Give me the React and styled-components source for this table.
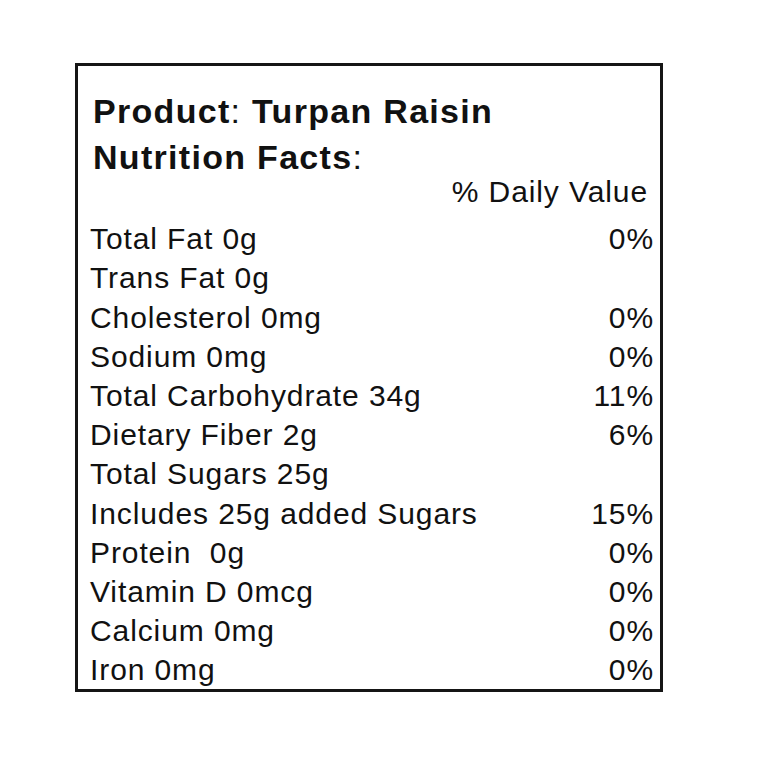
import styled, { createGlobalStyle } from "styled-components";

const GlobalStyle = createGlobalStyle`
  html, body {
    margin: 0;
    padding: 0;
    background: #ffffff;
  }
  body {
    font-family: "Liberation Sans", Arial, sans-serif;
    color: #111111;
  }
`;

const Page = styled.div`
  padding: 63px 0 0 75px;
`;

const Label = styled.section`
  box-sizing: border-box;
  width: 588px;
  height: 629px;
  border: 3px solid #151515;
  padding: 22px 6px 0 12px;
  display: flex;
  flex-direction: column;
`;

const Heading = styled.h1`
  margin: 0 0 0 3px;
  font-size: 34px;
  line-height: 46px;
  font-weight: 700;
  letter-spacing: 1.3px;
  color: #111;
`;

const Colon = styled.span`
  font-weight: 400;
`;

const Row = styled.div`
  display: grid;
  grid-template-columns: 1fr auto;
  align-items: baseline;
  height: 39.2px;
  margin-top: ${(p) => (p.$head ? "-8px" : "0")};
  margin-bottom: ${(p) => (p.$head ? "8px" : "0")};
  font-size: 30px;
  line-height: 39.2px;
  letter-spacing: 0.9px;
  color: #111;
  white-space: pre;
`;

const Name = styled.span``;

const Percent = styled.span`
  text-align: right;
  margin-right: ${(p) => (p.$head ? "6px" : "0")};
`;

const facts = [
  { name: "Total Fat 0g", dv: "0%" },
  { name: "Trans Fat 0g", dv: "" },
  { name: "Cholesterol 0mg", dv: "0%" },
  { name: "Sodium 0mg", dv: "0%" },
  { name: "Total Carbohydrate 34g", dv: "11%" },
  { name: "Dietary Fiber 2g", dv: "6%" },
  { name: "Total Sugars 25g", dv: "" },
  { name: "Includes 25g added Sugars", dv: "15%" },
  { name: "Protein  0g", dv: "0%" },
  { name: "Vitamin D 0mcg", dv: "0%" },
  { name: "Calcium 0mg", dv: "0%" },
  { name: "Iron 0mg", dv: "0%" },
];

export default function App() {
  return (
    <Page>
      <GlobalStyle />
      <Label>
        <Heading>
          Product<Colon>:</Colon> Turpan Raisin
          <br />
          Nutrition Facts<Colon>:</Colon>
        </Heading>
        <Row $head>
          <Name />
          <Percent $head>% Daily Value</Percent>
        </Row>
        {facts.map((f) => (
          <Row key={f.name}>
            <Name>{f.name}</Name>
            <Percent>{f.dv}</Percent>
          </Row>
        ))}
      </Label>
    </Page>
  );
}
